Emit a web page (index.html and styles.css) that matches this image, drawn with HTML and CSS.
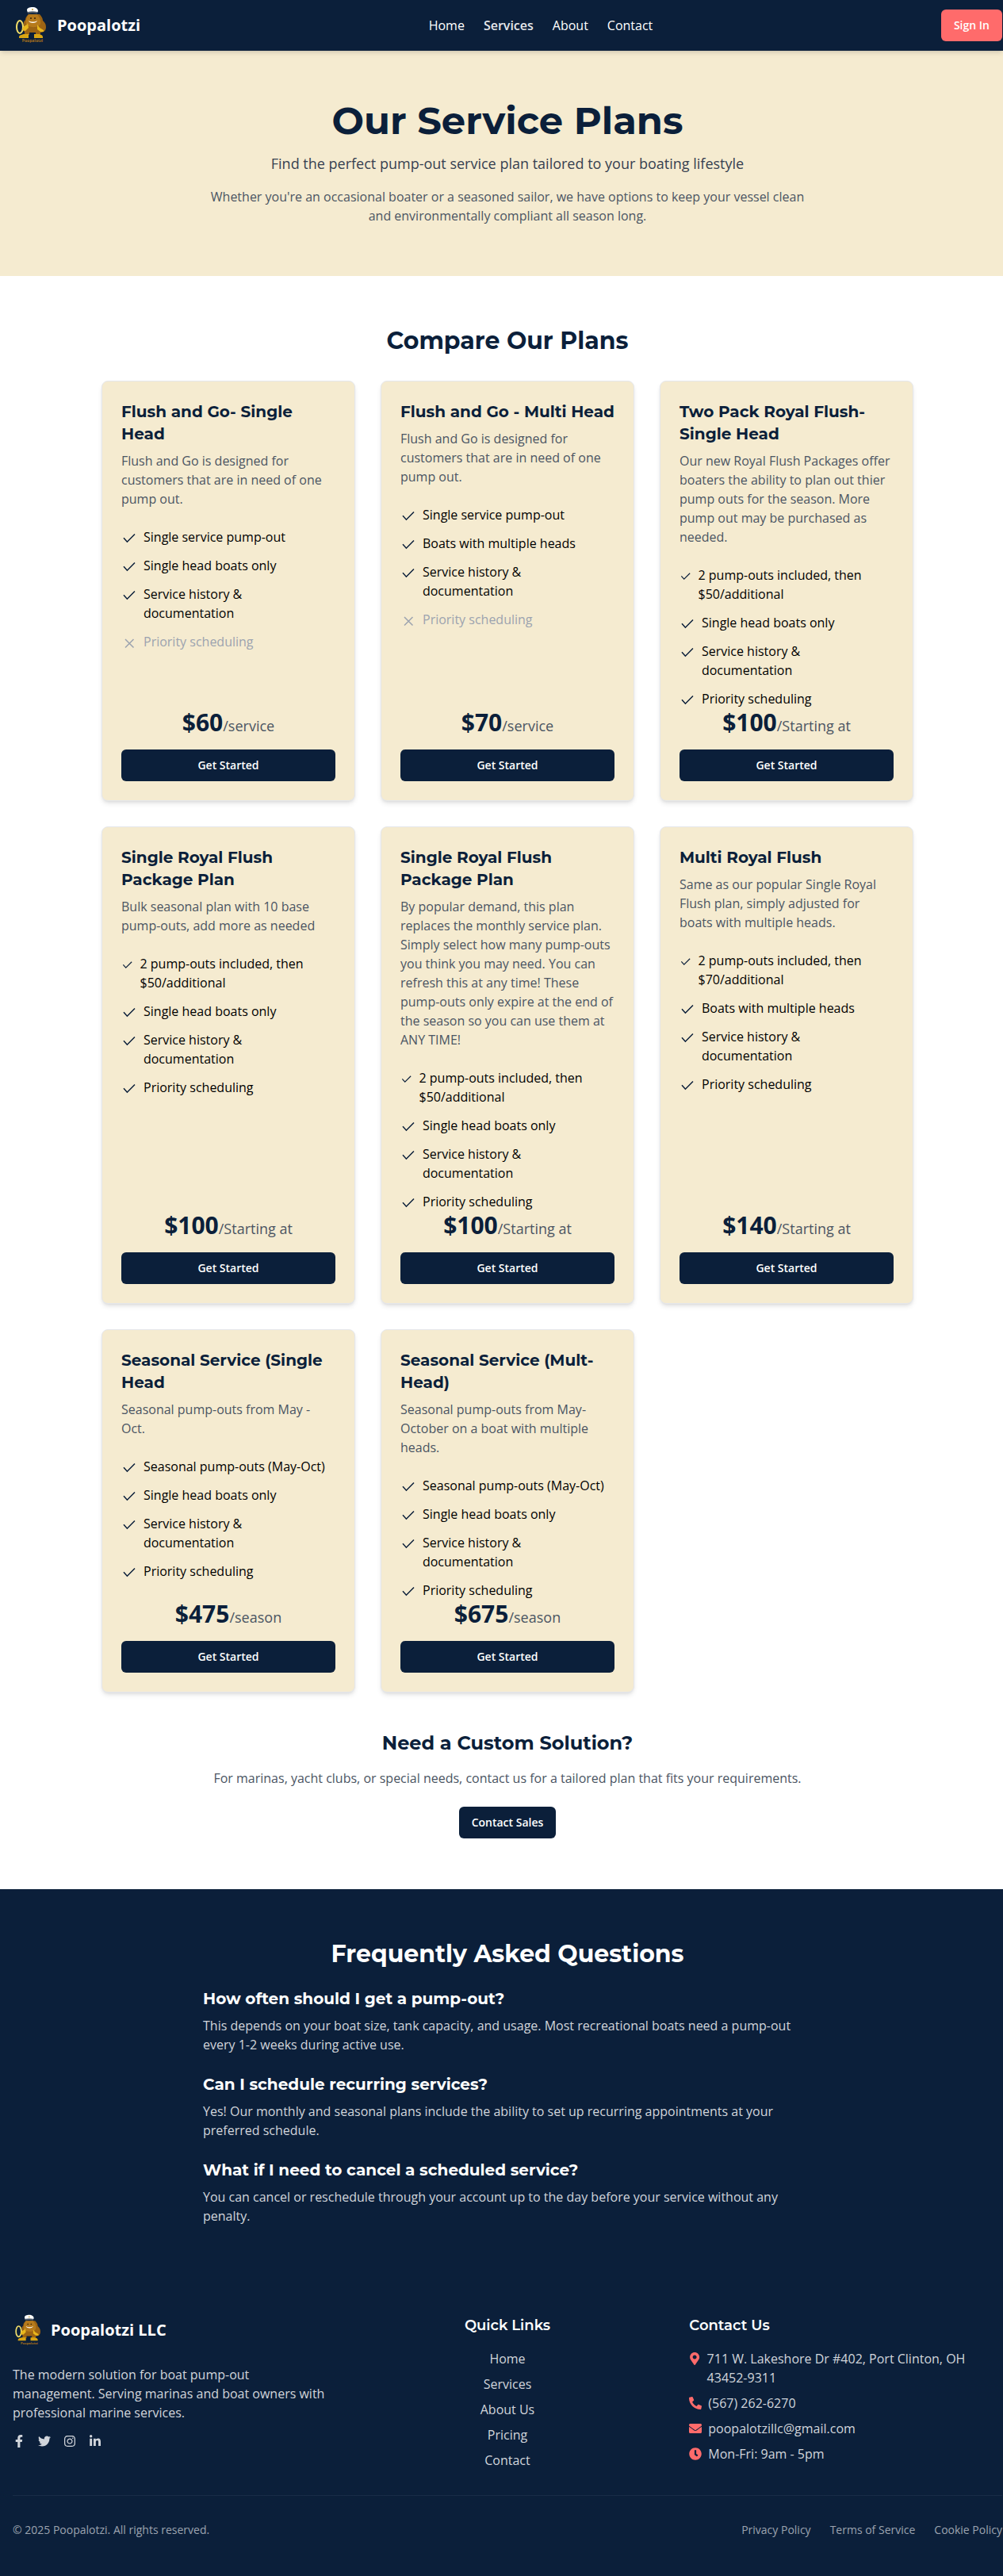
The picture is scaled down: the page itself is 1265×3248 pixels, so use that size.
FILE: index.html
```
<!DOCTYPE html>
<html lang="en">
<head>
<meta charset="utf-8">
<meta name="viewport" content="width=device-width, initial-scale=1">
<title>Poopalotzi - Service Plans</title>
<link rel="stylesheet" href="styles.css">
</head>
<body>
<svg class="sprite" aria-hidden="true">
  <symbol id="mascot" viewBox="0 0 48 48">
    <path d="M20 10c-2 2-4 4-4 7-2 2-3 4-2 6-2 2-3 5-1 7 2 3 5 3 8 3h14c4 0 7-2 7-7 0-4-2-6-4-8 0-3-2-6-4-8z" fill="#9c6414"/>
    <path d="M20 10c-3 4-4 8-3 12 1 5 16 6 18 0 1-5-2-9-4-12z" fill="#b67a1c"/>
    <path d="M15 30h6v6h-6zM29 30h6v6h-6z" fill="#9c6414"/>
    <path d="M8 39c0-3 3-3 6-4h6v5H8zM27 35h6c3 1 5 1 5 4v1H27z" fill="#d9a514"/>
    <ellipse cx="9" cy="26" rx="4" ry="8" fill="none" stroke="#f3df6a" stroke-width="2"/>
    <path d="M12 30l1-4 5-3 1-2 1 6-4 4zM39 30l-5-3-3-4 0 6 4 3 4 0z" fill="#e8b71d"/>
    <path d="M18 5c0-3 3-4 7-4s7 2 7 5l-1 2c-4-1-8-1-12 0z" fill="#fff"/>
    <path d="M19 7c4-1 8-1 12 0v2c-4-1-8-1-12 0z" fill="#56606c"/>
    <circle cx="25" cy="4" r="1" fill="#c79b2d"/>
    <circle cx="23" cy="15" r="1" fill="#33200a"/><circle cx="28" cy="15" r="1" fill="#33200a"/>
    <path d="M20 18c3 2 8 2 11 0-1 4-10 4-11 0z" fill="#fff"/>
    <text x="25" y="45" text-anchor="middle" font-family="Open Sans, sans-serif" font-size="5" font-weight="700" fill="#a8701a">Poopalotzi</text>
  </symbol>
  <symbol id="check" viewBox="0 0 20 20"><path d="M3 9.200 7.400 14.200 17 4.500" fill="none" stroke="currentColor" stroke-width="1.500"/></symbol>
  <symbol id="cross" viewBox="0 0 20 20"><path d="M5 5 15.500 15.500M15.500 5 5 15.500" fill="none" stroke="currentColor" stroke-width="1.500"/></symbol>
  <symbol id="facebook" viewBox="0 0 320 512"><path fill="currentColor" d="M279.140 288l14.220-92.660h-88.910v-60.130c0-25.350 12.420-50.060 52.240-50.060h40.420V6.260S260.430 0 225.360 0c-73.220 0-121.080 44.380-121.080 124.720v70.620H22.890V288h81.390v224h100.170V288z"/></symbol>
  <symbol id="twitter" viewBox="0 0 512 512"><path fill="currentColor" d="M459.370 151.716c.325 4.548.325 9.097.325 13.645 0 138.720-105.583 298.558-298.558 298.558-59.452 0-114.680-17.219-161.137-47.106 8.447.974 16.568 1.299 25.340 1.299 49.055 0 94.213-16.568 130.274-44.832-46.132-.975-84.792-31.188-98.112-72.772 6.498.974 12.995 1.624 19.818 1.624 9.421 0 18.843-1.300 27.614-3.573-48.081-9.747-84.143-51.980-84.143-102.985v-1.299c13.969 7.797 30.214 12.670 47.431 13.319-28.264-18.843-46.781-51.005-46.781-87.391 0-19.492 5.197-37.360 14.294-52.954 51.655 63.675 129.300 105.258 216.365 109.807-1.624-7.797-2.599-15.918-2.599-24.040 0-57.828 46.782-104.934 104.934-104.934 30.213 0 57.502 12.670 76.670 33.137 23.715-4.548 46.456-13.320 66.599-25.340-7.798 24.366-24.366 44.833-46.132 57.827 21.117-2.273 41.584-8.122 60.426-16.243-14.292 20.791-32.161 39.308-52.628 54.253z"/></symbol>
  <symbol id="instagram" viewBox="0 0 448 512"><path fill="currentColor" d="M224.100 141c-63.600 0-114.900 51.300-114.900 114.900s51.300 114.900 114.900 114.900S339 319.500 339 255.900 287.700 141 224.100 141zm0 189.600c-41.100 0-74.700-33.500-74.700-74.700s33.500-74.700 74.700-74.700 74.700 33.500 74.700 74.700-33.600 74.700-74.700 74.700zm146.400-194.300c0 14.900-12 26.800-26.800 26.800-14.900 0-26.800-12-26.800-26.800s12-26.800 26.800-26.800 26.800 12 26.800 26.800zm76.100 27.200c-1.700-35.900-9.900-67.700-36.200-93.900-26.200-26.200-58-34.400-93.900-36.200-37-2.100-147.900-2.100-184.900 0-35.800 1.700-67.600 9.900-93.900 36.100s-34.400 58-36.200 93.900c-2.100 37-2.100 147.900 0 184.900 1.700 35.900 9.900 67.700 36.200 93.900s58 34.400 93.900 36.200c37 2.100 147.900 2.100 184.900 0 35.900-1.700 67.700-9.900 93.900-36.200 26.200-26.200 34.400-58 36.200-93.900 2.100-37 2.100-147.800 0-184.800zM398.800 388c-7.800 19.600-22.900 34.700-42.600 42.600-29.500 11.700-99.500 9-132.100 9s-102.700 2.600-132.100-9c-19.600-7.800-34.700-22.900-42.600-42.600-11.700-29.500-9-99.500-9-132.100s-2.600-102.700 9-132.100c7.800-19.600 22.900-34.700 42.600-42.600 29.500-11.700 99.500-9 132.100-9s102.700-2.600 132.100 9c19.600 7.800 34.700 22.900 42.600 42.600 11.700 29.500 9 99.500 9 132.100s2.700 102.700-9 132.100z"/></symbol>
  <symbol id="linkedin" viewBox="0 0 448 512"><path fill="currentColor" d="M100.280 448H7.400V148.900h92.880zM53.790 108.100C24.090 108.100 0 83.500 0 53.800a53.790 53.790 0 0 1 107.580 0c0 29.700-24.100 54.300-53.790 54.300zM447.900 448h-92.680V302.400c0-34.700-.7-79.200-48.290-79.200-48.290 0-55.690 37.700-55.690 76.700V448h-92.780V148.900h89.080v40.800h1.300c12.400-23.500 42.690-48.300 87.880-48.300 94 0 111.280 61.900 111.280 142.300V448z"/></symbol>
  <symbol id="pin" viewBox="0 0 384 512"><path fill="currentColor" d="M172.268 501.670C26.970 291.031 0 269.413 0 192 0 85.961 85.961 0 192 0s192 85.961 192 192c0 77.413-26.970 99.031-172.268 309.670-9.535 13.774-29.930 13.773-39.464 0zM192 272c44.183 0 80-35.817 80-80s-35.817-80-80-80-80 35.817-80 80 35.817 80 80 80z"/></symbol>
  <symbol id="phone" viewBox="0 0 512 512"><path fill="currentColor" d="M493.400 24.600l-104-24c-11.300-2.600-22.900 3.300-27.500 13.900l-48 112c-4.200 9.800-1.400 21.300 6.900 28l60.600 49.600c-36 76.700-98.900 140.500-177.200 177.200l-49.600-60.600c-6.800-8.300-18.200-11.100-28-6.900l-112 48C3.900 366.500-2 378.100.6 389.400l24 104C27.100 504.200 36.700 512 48 512c256.100 0 464-207.500 464-464 0-11.200-7.700-20.900-18.600-23.400z" transform="matrix(-1 0 0 1 512 0)"/></symbol>
  <symbol id="mail" viewBox="0 0 512 512"><path fill="currentColor" d="M502.300 190.800c3.900-3.100 9.700-.2 9.700 4.700V400c0 26.500-21.500 48-48 48H48c-26.500 0-48-21.500-48-48V195.600c0-5 5.700-7.800 9.700-4.700 22.400 17.400 52.100 39.500 154.100 113.600 21.100 15.400 56.700 47.800 92.200 47.600 35.700.3 72-32.800 92.300-47.600 102-74.100 131.600-96.300 154-113.700zM256 320c23.200.4 56.600-29.200 73.400-41.400 132.700-96.300 142.800-104.700 173.400-128.700 5.800-4.500 9.200-11.500 9.200-18.900v-19c0-26.500-21.500-48-48-48H48c-26.500 0-48 21.500-48 48v19c0 7.400 3.400 14.300 9.200 18.900 30.600 23.900 40.700 32.400 173.400 128.700 16.800 12.200 50.200 41.800 73.400 41.400z"/></symbol>
  <symbol id="clock" viewBox="0 0 512 512"><path fill="currentColor" d="M256 8C119 8 8 119 8 256s111 248 248 248 248-111 248-248S393 8 256 8zm57.100 350.100L224.900 294c-3.100-2.300-4.900-5.900-4.900-9.700V116c0-6.600 5.400-12 12-12h48c6.600 0 12 5.400 12 12v137.700l63.500 46.200c5.400 3.900 6.500 11.400 2.600 16.800l-28.200 38.800c-3.900 5.300-11.400 6.500-16.800 2.600z"/></symbol>
</svg>

<header class="site-header">
  <div class="container header-row">
    <a class="brand" href="#"><svg class="brand-logo"><use href="#mascot"/></svg><span>Poopalotzi</span></a>
    <nav class="main-nav">
      <a href="#">Home</a>
      <a class="active" href="#">Services</a>
      <a href="#">About</a>
      <a href="#">Contact</a>
    </nav>
    <button class="btn btn-coral" type="button">Sign In</button>
  </div>
</header>

<main>
  <section class="hero">
    <div class="container">
      <h1>Our Service Plans</h1>
      <p class="lead">Find the perfect pump-out service plan tailored to your boating lifestyle</p>
      <p class="intro">Whether you're an occasional boater or a seasoned sailor, we have options to keep your vessel clean and environmentally compliant all season long.</p>
    </div>
  </section>

  <section class="plans">
    <div class="container">
      <h2>Compare Our Plans</h2>
      <div class="plan-grid">
        <article class="plan">
          <h3>Flush and Go- Single Head</h3>
          <p class="desc">Flush and Go is designed for customers that are in need of one pump out.</p>
          <ul>
            <li><svg><use href="#check"/></svg><span>Single service pump-out</span></li>
            <li><svg><use href="#check"/></svg><span>Single head boats only</span></li>
            <li><svg><use href="#check"/></svg><span>Service history &amp; documentation</span></li>
            <li class="off"><svg><use href="#cross"/></svg><span>Priority scheduling</span></li>
          </ul>
          <p class="price"><strong>$60</strong><span>/service</span></p>
          <button class="btn" type="button">Get Started</button>
        </article>
        <article class="plan">
          <h3>Flush and Go - Multi Head</h3>
          <p class="desc">Flush and Go is designed for customers that are in need of one pump out.</p>
          <ul>
            <li><svg><use href="#check"/></svg><span>Single service pump-out</span></li>
            <li><svg><use href="#check"/></svg><span>Boats with multiple heads</span></li>
            <li><svg><use href="#check"/></svg><span>Service history &amp; documentation</span></li>
            <li class="off"><svg><use href="#cross"/></svg><span>Priority scheduling</span></li>
          </ul>
          <p class="price"><strong>$70</strong><span>/service</span></p>
          <button class="btn" type="button">Get Started</button>
        </article>
        <article class="plan">
          <h3>Two Pack Royal Flush- Single Head</h3>
          <p class="desc">Our new Royal Flush Packages offer boaters the ability to plan out thier pump outs for the season. More pump out may be purchased as needed.</p>
          <ul>
            <li><svg><use href="#check"/></svg><span>2 pump-outs included, then $50/additional</span></li>
            <li><svg><use href="#check"/></svg><span>Single head boats only</span></li>
            <li><svg><use href="#check"/></svg><span>Service history &amp; documentation</span></li>
            <li><svg><use href="#check"/></svg><span>Priority scheduling</span></li>
          </ul>
          <p class="price"><strong>$100</strong><span>/Starting at</span></p>
          <button class="btn" type="button">Get Started</button>
        </article>
        <article class="plan">
          <h3>Single Royal Flush Package Plan</h3>
          <p class="desc">Bulk seasonal plan with 10 base pump-outs, add more as needed</p>
          <ul>
            <li><svg><use href="#check"/></svg><span>2 pump-outs included, then $50/additional</span></li>
            <li><svg><use href="#check"/></svg><span>Single head boats only</span></li>
            <li><svg><use href="#check"/></svg><span>Service history &amp; documentation</span></li>
            <li><svg><use href="#check"/></svg><span>Priority scheduling</span></li>
          </ul>
          <p class="price"><strong>$100</strong><span>/Starting at</span></p>
          <button class="btn" type="button">Get Started</button>
        </article>
        <article class="plan">
          <h3>Single Royal Flush Package Plan</h3>
          <p class="desc">By popular demand, this plan replaces the monthly service plan. Simply select how many pump-outs you think you may need. You can refresh this at any time! These pump-outs only expire at the end of the season so you can use them at ANY TIME!</p>
          <ul>
            <li><svg><use href="#check"/></svg><span>2 pump-outs included, then $50/additional</span></li>
            <li><svg><use href="#check"/></svg><span>Single head boats only</span></li>
            <li><svg><use href="#check"/></svg><span>Service history &amp; documentation</span></li>
            <li><svg><use href="#check"/></svg><span>Priority scheduling</span></li>
          </ul>
          <p class="price"><strong>$100</strong><span>/Starting at</span></p>
          <button class="btn" type="button">Get Started</button>
        </article>
        <article class="plan">
          <h3>Multi Royal Flush</h3>
          <p class="desc">Same as our popular Single Royal Flush plan, simply adjusted for boats with multiple heads.</p>
          <ul>
            <li><svg><use href="#check"/></svg><span>2 pump-outs included, then $70/additional</span></li>
            <li><svg><use href="#check"/></svg><span>Boats with multiple heads</span></li>
            <li><svg><use href="#check"/></svg><span>Service history &amp; documentation</span></li>
            <li><svg><use href="#check"/></svg><span>Priority scheduling</span></li>
          </ul>
          <p class="price"><strong>$140</strong><span>/Starting at</span></p>
          <button class="btn" type="button">Get Started</button>
        </article>
        <article class="plan">
          <h3>Seasonal Service (Single Head</h3>
          <p class="desc">Seasonal pump-outs from May - Oct.</p>
          <ul>
            <li><svg><use href="#check"/></svg><span>Seasonal pump-outs (May-Oct)</span></li>
            <li><svg><use href="#check"/></svg><span>Single head boats only</span></li>
            <li><svg><use href="#check"/></svg><span>Service history &amp; documentation</span></li>
            <li><svg><use href="#check"/></svg><span>Priority scheduling</span></li>
          </ul>
          <p class="price"><strong>$475</strong><span>/season</span></p>
          <button class="btn" type="button">Get Started</button>
        </article>
        <article class="plan">
          <h3>Seasonal Service (Mult-Head)</h3>
          <p class="desc">Seasonal pump-outs from May-October on a boat with multiple heads.</p>
          <ul>
            <li><svg><use href="#check"/></svg><span>Seasonal pump-outs (May-Oct)</span></li>
            <li><svg><use href="#check"/></svg><span>Single head boats only</span></li>
            <li><svg><use href="#check"/></svg><span>Service history &amp; documentation</span></li>
            <li><svg><use href="#check"/></svg><span>Priority scheduling</span></li>
          </ul>
          <p class="price"><strong>$675</strong><span>/season</span></p>
          <button class="btn" type="button">Get Started</button>
        </article>
      </div>
      <div class="custom">
        <h3>Need a Custom Solution?</h3>
        <p>For marinas, yacht clubs, or special needs, contact us for a tailored plan that fits your requirements.</p>
        <button class="btn" type="button">Contact Sales</button>
      </div>
    </div>
  </section>

  <section class="faq">
    <div class="container">
      <h2>Frequently Asked Questions</h2>
      <div class="faq-list">
        <div>
          <h3>How often should I get a pump-out?</h3>
          <p>This depends on your boat size, tank capacity, and usage. Most recreational boats need a pump-out every 1-2 weeks during active use.</p>
        </div>
        <div>
          <h3>Can I schedule recurring services?</h3>
          <p>Yes! Our monthly and seasonal plans include the ability to set up recurring appointments at your preferred schedule.</p>
        </div>
        <div>
          <h3>What if I need to cancel a scheduled service?</h3>
          <p>You can cancel or reschedule through your account up to the day before your service without any penalty.</p>
        </div>
      </div>
    </div>
  </section>
</main>

<footer class="site-footer">
  <div class="container">
    <div class="footer-grid">
      <div class="about">
        <a class="brand" href="#"><svg class="footer-logo"><use href="#mascot"/></svg><span>Poopalotzi LLC</span></a>
        <p>The modern solution for boat pump-out management. Serving marinas and boat owners with professional marine services.</p>
        <div class="social">
          <a href="#" aria-label="Facebook"><svg><use href="#facebook"/></svg></a>
          <a href="#" aria-label="Twitter"><svg><use href="#twitter"/></svg></a>
          <a href="#" aria-label="Instagram"><svg><use href="#instagram"/></svg></a>
          <a href="#" aria-label="LinkedIn"><svg><use href="#linkedin"/></svg></a>
        </div>
      </div>
      <div class="quick">
        <h4>Quick Links</h4>
        <ul>
          <li><a href="#">Home</a></li>
          <li><a href="#">Services</a></li>
          <li><a href="#">About Us</a></li>
          <li><a href="#">Pricing</a></li>
          <li><a href="#">Contact</a></li>
        </ul>
      </div>
      <div class="contact">
        <h4>Contact Us</h4>
        <ul>
          <li><svg><use href="#pin"/></svg><span>711 W. Lakeshore Dr #402, Port Clinton, OH 43452-9311</span></li>
          <li><svg><use href="#phone"/></svg><span>(567) 262-6270</span></li>
          <li><svg><use href="#mail"/></svg><span>poopalotzillc@gmail.com</span></li>
          <li><svg><use href="#clock"/></svg><span>Mon-Fri: 9am - 5pm</span></li>
        </ul>
      </div>
    </div>
    <div class="legal">
      <p>© 2025 Poopalotzi. All rights reserved.</p>
      <nav>
        <a href="#">Privacy Policy</a>
        <a href="#">Terms of Service</a>
        <a href="#">Cookie Policy</a>
      </nav>
    </div>
  </div>
</footer>
</body>
</html>
```
FILE: styles.css
```
:root {
  --navy: #0b1f3a;
  --sand: #f5ebd0;
  --coral: #ff6b6b;
  --display: "Montserrat", "Open Sans", sans-serif;
}

*, *::before, *::after { box-sizing: border-box; }

body {
  margin: 0;
  background: #fff;
  color: #000;
  font: 16px/24px "Open Sans", "Noto Sans", sans-serif;
}

h1, h2, h3, h4, p, ul { margin: 0; padding: 0; }
ul { list-style: none; }
a { color: inherit; text-decoration: none; }
svg { display: block; }
.sprite { display: none; }

h1, h2, h3, h4 { font-family: var(--display); color: var(--navy); font-weight: 700; }
h2 { font-size: 30px; line-height: 36px; text-align: center; }
h3 { font-size: 20px; line-height: 28px; }

.container {
  max-width: 1280px;
  margin: 0 auto;
  padding: 0 1px 0 16px;
}

.btn {
  height: 40px;
  padding: 0 16px;
  border: 0;
  border-radius: 6px;
  background: var(--navy);
  color: #fff;
  font: 600 14px/20px "Open Sans", "Noto Sans", sans-serif;
  cursor: pointer;
}
.btn-coral { background: var(--coral); }

/* Header */
.site-header {
  position: relative;
  background: var(--navy);
  color: #fff;
  box-shadow: 0 4px 6px -1px rgba(0, 0, 0, .1), 0 2px 4px -2px rgba(0, 0, 0, .1);
}
.header-row { display: flex; align-items: center; justify-content: space-between; min-height: 64px; }
.brand { display: flex; align-items: center; gap: 8px; font-size: 20px; line-height: 28px; font-weight: 700; color: #fff; }
.brand-logo { width: 48px; height: 48px; }
.main-nav { display: flex; gap: 24px; }
.main-nav .active { color: #e5e7eb; font-weight: 600; }

/* Hero */
.hero { background: var(--sand); padding: 64px 0; text-align: center; }
.hero h1 { font-size: 48px; line-height: 48px; margin-bottom: 16px; }
.lead { font-size: 18px; line-height: 28px; color: #374151; margin-bottom: 16px; }
.intro { max-width: 768px; margin: 0 auto; color: #4b5563; }

/* Plans */
.plans { padding: 64px 0; }
.plan-grid {
  display: grid;
  grid-template-columns: repeat(3, 1fr);
  gap: 32px;
  max-width: 1024px;
  margin: 32px auto 48px;
}
.plan {
  display: flex;
  flex-direction: column;
  padding: 24px;
  border: 1px solid #e5e7eb;
  border-radius: 8px;
  background: var(--sand);
  box-shadow: 0 4px 6px -1px rgba(0, 0, 0, .1), 0 2px 4px -2px rgba(0, 0, 0, .1);
}
.desc { margin: 8px 0 24px; color: #4b5563; }
.plan ul { display: grid; gap: 12px; }
.plan li { display: flex; align-items: flex-start; }
.plan li svg { width: 20px; height: 20px; margin: 4px 8px 0 0; color: var(--navy); }
.plan .off, .plan .off svg { color: #9ca3af; }
.price { margin: auto 0 16px; text-align: center; font-size: 30px; line-height: 36px; color: var(--navy); }
.price span { font-size: 18px; line-height: 28px; color: #4b5563; }

.custom { text-align: center; }
.custom h3 { font-size: 24px; line-height: 32px; }
.custom p { margin: 16px 0 24px; color: #4b5563; }
.custom .btn { display: block; margin: 0 auto; }

/* FAQ */
.faq { background: var(--navy); padding: 64px 0; color: #d1d5db; }
.faq h2, .faq h3 { color: #fff; }
.faq-list { display: grid; gap: 24px; max-width: 768px; margin: 24px auto 0; }
.faq h3 { margin-bottom: 8px; }

/* Footer */
.site-footer { background: var(--navy); padding: 48px 0; color: #d1d5db; }
.footer-grid { display: grid; grid-template-columns: repeat(3, 1fr); gap: 32px; margin-bottom: 32px; }
.footer-logo { width: 40px; height: 40px; }
.about p { margin: 24px 0 16px; }
.social { display: flex; gap: 16px; }
.social svg { width: 16px; height: 16px; }
.site-footer h4 { font-size: 18px; line-height: 28px; font-weight: 600; color: #fff; margin-bottom: 16px; }
.quick { text-align: center; }
.quick ul, .contact ul { display: grid; gap: 8px; }
.contact li { display: flex; align-items: flex-start; }
.contact svg { width: 16px; height: 16px; margin: 4px 8px 0 0; color: var(--coral); }
.legal {
  display: flex;
  justify-content: space-between;
  align-items: center;
  border-top: 1px solid #192c46;
  padding-top: 32px;
  font-size: 14px;
  line-height: 21px;
  color: #9ca3af;
}
.legal nav { display: flex; gap: 24px; }
```
